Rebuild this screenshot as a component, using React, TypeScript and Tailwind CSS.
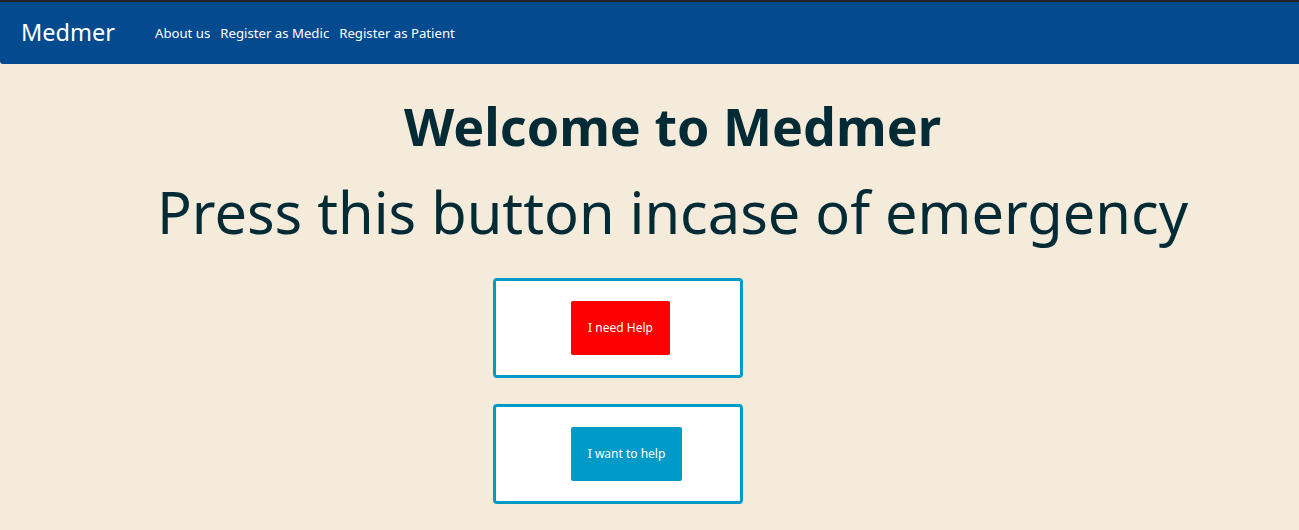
export default function App() {
  return (
    <div className="min-h-[530px] bg-[#f5ebdb] font-['Noto_Sans',sans-serif] text-[#032b36]">
      <nav className="flex h-[64px] items-center border-t-2 border-[#222] bg-[#034a8f] pl-[21px] text-white rounded-bl-[3px]">
        <span className="text-[23.5px] leading-none">Medmer</span>
        <div className="ml-[40px] mt-[2px] flex gap-[10px] text-[13.2px]">
          <a>About us</a>
          <a>Register as Medic</a>
          <a>Register as Patient</a>
        </div>
      </nav>
      <div className="pl-[46px] text-center">
        <h1 className="mt-[31px] text-[52px] font-bold leading-[1.2]">Welcome to Medmer</h1>
        <h2 className="mt-[20px] text-[57.7px] leading-[1.2]">Press this button incase of emergency</h2>
      </div>
      <div className="mt-[31px] flex flex-col gap-[26px] pl-[493px]">
        <div className="flex h-[100px] w-[250px] items-center rounded-[4px] border-[3px] border-[#009ac9] bg-white pl-[75px]">
          <button className="h-[54px] w-[99px] rounded-[2px] bg-[#ff0000] text-[12px] text-white">I need Help</button>
        </div>
        <div className="flex h-[100px] w-[250px] items-center rounded-[4px] border-[3px] border-[#009ac9] bg-white pl-[75px]">
          <button className="h-[54px] w-[111px] rounded-[2px] bg-[#009ac9] text-[12px] text-white">I want to help</button>
        </div>
      </div>
    </div>
  );
}
